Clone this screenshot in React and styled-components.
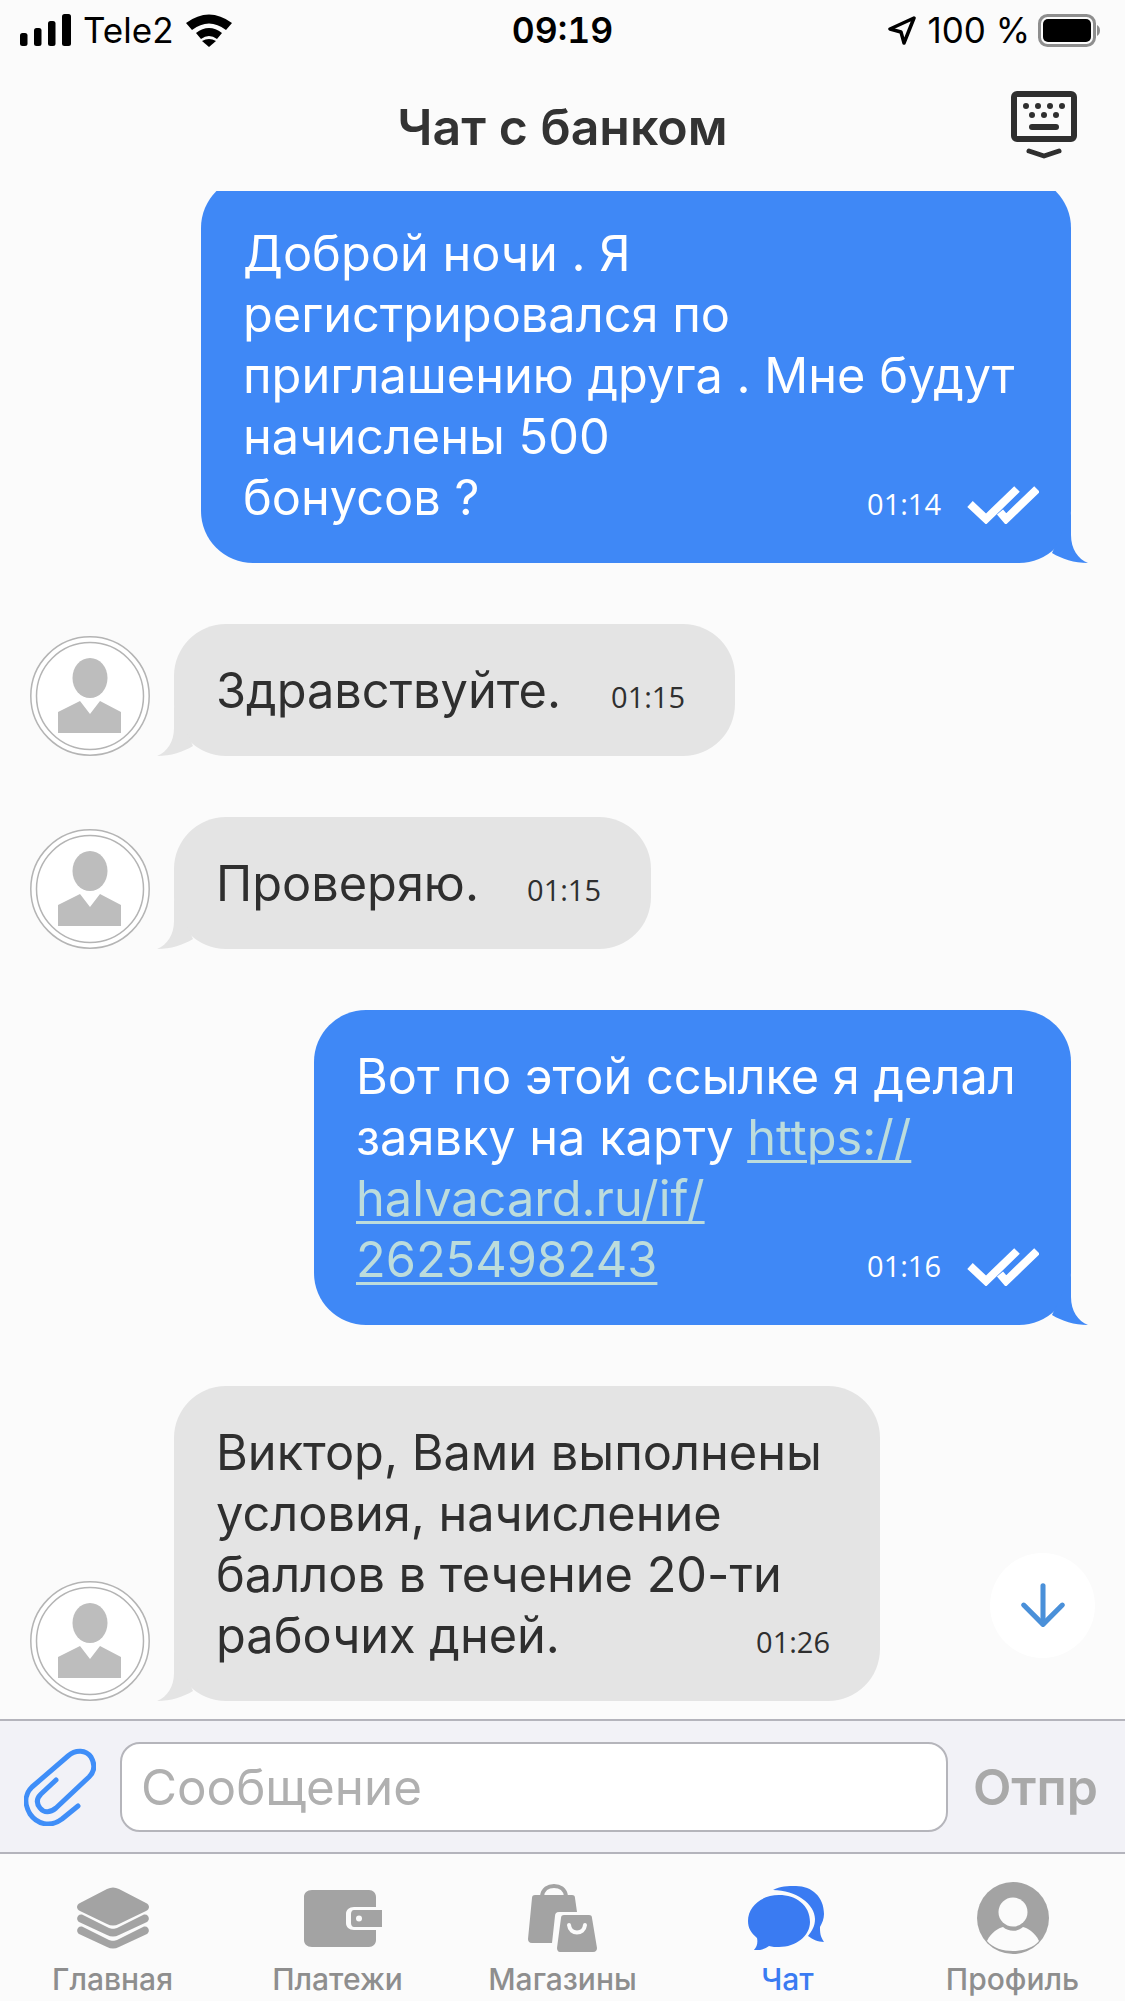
import React from 'react';
import styled, { createGlobalStyle } from 'styled-components';

const BLUE = '#3f88f6';
const GREY = '#e4e4e4';

const GlobalStyle = createGlobalStyle`
  html, body {
    margin: 0;
    padding: 0;
    background: #fbfbfb;
  }
  * {
    box-sizing: border-box;
  }
`;

const Page = styled.div`
  width: 1125px;
  height: 2001px;
  display: flex;
  flex-direction: column;
  overflow: hidden;
  position: relative;
  background: #fbfbfb;
  color: #2f2f2f;
  font-family: Inter, 'Noto Sans', sans-serif;
`;

const StatusBar = styled.div`
  height: 60px;
  flex: none;
  display: grid;
  grid-template-columns: 1fr auto 1fr;
  align-items: center;
  padding: 0 20px;
  color: #000;
  font-size: 35px;
`;

const StatusLeft = styled.div`
  display: flex;
  align-items: center;
  gap: 12px;
`;

const StatusRight = styled.div`
  display: flex;
  align-items: center;
  justify-content: flex-end;
  gap: 11px;
  padding-right: 5px;
`;

const BatteryLevel = styled.span`
  margin-right: -3px;
`;

const Clock = styled.div`
  font-size: 35.5px;
  font-weight: 600;
  font-variant-numeric: tabular-nums;
`;

const Header = styled.div`
  height: 131px;
  flex: none;
  display: grid;
  grid-template-columns: 1fr auto 1fr;
  align-items: center;
`;

const Title = styled.h1`
  grid-column: 2;
  margin: 3px 0 0;
  font-size: 50px;
  font-weight: 600;
  color: #333;
`;

const KeyboardButton = styled.div`
  justify-self: end;
  display: flex;
  margin: 0 48px 2px 0;
`;

const Messages = styled.div`
  flex: 1;
  min-height: 0;
  display: flex;
  flex-direction: column;
  gap: 61px;
  overflow: hidden;
  padding: 0 54px 0 30px;
`;

const Row = styled.div`
  display: flex;
  flex: none;
  align-items: flex-end;
  justify-content: ${p => (p.$own ? 'flex-end' : 'flex-start')};
  gap: 24px;
  margin-top: ${p => (p.$clip ? '-15px' : '0')};
`;

const Bubble = styled.div`
  position: relative;
  width: ${p => p.$width}px;
  padding: ${p => p.$top}px ${p => (p.$own ? 32 : 50)}px 35px 42px;
  border-radius: 52px;
  background: ${p => (p.$own ? BLUE : GREY)};
  color: ${p => (p.$own ? '#fff' : '#2f2f2f')};
  font-size: 48.7px;
  line-height: 61px;
`;

const LastLine = styled.div`
  display: flex;
  align-items: baseline;
  justify-content: space-between;
`;

const Meta = styled.span`
  display: inline-flex;
  align-items: center;
  gap: 26px;
  font-family: 'Open Sans', sans-serif;
  font-size: 29px;
  line-height: 30px;
  white-space: nowrap;
`;

const Link = styled.span`
  color: #bcdcdc;
  text-decoration: underline;
  text-decoration-thickness: 3px;
  text-underline-offset: 5px;
`;

const Tail = styled.svg`
  position: absolute;
  bottom: 0;
  ${p => (p.$own ? 'right: -17px;' : 'left: -17px;')}
`;

const Avatar = styled.svg`
  flex: none;
`;

const ScrollDown = styled.div`
  position: absolute;
  left: 990px;
  top: 1553px;
  width: 105px;
  height: 105px;
  border-radius: 50%;
  background: #fff;
  display: flex;
  align-items: center;
  justify-content: center;
`;

const Composer = styled.div`
  height: 135px;
  flex: none;
  display: flex;
  align-items: center;
  padding: 0 27px 0 24px;
  background: #f2f2f7;
  border-top: 2px solid #b4b4bc;
  border-bottom: 2px solid #b4b4bc;
`;

const ClipButton = styled.div`
  display: flex;
  margin-right: 24px;
`;

const MessageField = styled.div`
  width: 828px;
  height: 90px;
  flex: none;
  display: flex;
  align-items: center;
  padding: 0 19px;
  background: #fff;
  border: 2px solid #b5b5bb;
  border-radius: 20px;
  color: #b0b0b0;
  font-size: 49.3px;
`;

const SendLabel = styled.div`
  margin-left: auto;
  color: #a9a9a9;
  font-size: 50px;
  font-weight: 600;
`;

const TabBar = styled.div`
  height: 147px;
  flex: none;
  display: grid;
  grid-template-columns: repeat(5, 1fr);
  background: #fbfbfb;
`;

const Tab = styled.div`
  display: flex;
  flex-direction: column;
  align-items: center;
  color: ${p => (p.$active ? '#3a7bf2' : '#8e8e8e')};
  font-size: 30px;
  font-weight: 500;
`;

const TabIcon = styled.div`
  height: 72px;
  margin: 28px 0 0 ${p => p.$shift || 0}px;
  display: flex;
  align-items: center;
  justify-content: center;
`;

const TabLabel = styled.span`
  margin-top: 8px;
  line-height: 34px;
`;

const TailShape = ({ own, color }) => (
  <Tail $own={own} width="40" height="50" viewBox="0 0 40 50">
    {own ? (
      <path d="M23 0 L23 22 C23 36 30 46 40 50 C26 50 14 46 4 40Z" fill={color} />
    ) : (
      <path d="M17 0 L17 22 C17 36 10 46 0 50 C14 50 26 46 36 40Z" fill={color} />
    )}
  </Tail>
);

const DoubleCheck = () => (
  <svg width="72" height="40" viewBox="0 0 72 40" fill="none" stroke="#fff" strokeWidth="8">
    <path d="M3 20 L19 35 L50 5" />
    <path d="M33 28 L39 35 L70 5" />
  </svg>
);

const PersonAvatar = () => (
  <Avatar width="120" height="120" viewBox="0 0 120 120">
    <circle cx="60" cy="60" r="59.2" fill="#fff" stroke="#b4b4b4" strokeWidth="1.5" />
    <circle cx="60" cy="60" r="53.5" fill="#fff" stroke="#b4b4b4" strokeWidth="1.5" />
    <ellipse cx="60" cy="42" rx="17.5" ry="20" fill="#bdbdbd" />
    <path d="M28 97 L91 97 L91 76 L70 65 L60 78 L50 65 L28 76Z" fill="#bdbdbd" />
  </Avatar>
);

const SignalIcon = () => (
  <svg width="51" height="32" viewBox="0 0 51 32" fill="#000">
    <rect x="0" y="19" width="7.5" height="13" rx="2.5" />
    <rect x="14" y="14" width="7.5" height="18" rx="2.5" />
    <rect x="28" y="7" width="7.5" height="25" rx="2.5" />
    <rect x="42" y="0" width="9" height="32" rx="2.5" />
  </svg>
);

const WifiIcon = () => (
  <svg width="46" height="33" viewBox="0 0 46 33" fill="#000">
    <path d="M0 9 Q23 -8 46 9 L40 16 Q23 3 6 16Z" />
    <path d="M10 19 Q23 9 36 19 L31 25 Q23 19 15 25Z" />
    <path d="M23 33 L16 27 Q23 23 30 27Z" />
  </svg>
);

const LocationIcon = () => (
  <svg width="29" height="31" viewBox="0 0 29 31" fill="none" stroke="#000" strokeWidth="3.5" strokeLinejoin="round">
    <path d="M27 3 L3 14 L14 17 L17 28Z" />
  </svg>
);

const BatteryIcon = () => (
  <svg width="62" height="33" viewBox="0 0 62 33">
    <rect x="1.5" y="1.5" width="55" height="30" rx="8" fill="none" stroke="#8e8e8e" strokeWidth="3" />
    <rect x="5" y="5" width="48" height="23" rx="5" fill="#000" />
    <path d="M59 11 C61 12 62 14 62 16.5 C62 19 61 21 59 22Z" fill="#8e8e8e" />
  </svg>
);

const KeyboardIcon = () => (
  <svg width="66" height="68" viewBox="0 0 66 68" fill="#2f2f2f">
    <rect x="3" y="3" width="60" height="45" rx="3" fill="none" stroke="#2f2f2f" strokeWidth="6" />
    {[15, 27, 39, 51].map(x => <circle key={x} cx={x} cy="15" r="3" />)}
    {[21, 33, 45].map(x => <circle key={x} cx={x} cy="24" r="3" />)}
    <rect x="18" y="33" width="30" height="6" rx="3" />
    <path d="M18 60 L33 65 L48 60" fill="none" stroke="#2f2f2f" strokeWidth="5" strokeLinecap="round" strokeLinejoin="round" />
  </svg>
);

const ArrowDownIcon = () => (
  <svg width="46" height="46" viewBox="0 0 50 50" fill="none" stroke="#4a90d9" strokeWidth="5.5" strokeLinecap="round" strokeLinejoin="round">
    <path d="M25 3 V44" />
    <path d="M4 24 L25 45 L46 24" />
  </svg>
);

const PaperclipIcon = () => (
  <svg width="72" height="78" viewBox="0 0 72 78" fill="none" stroke="#3f8ef8" strokeWidth="5" strokeLinecap="round" strokeLinejoin="round">
    <path d="M54 58 L38 71 C26 80 13 76 6 66 C0 56 1 46 8 39 L44 8 C52 1 62 2 67 9 C71 16 71 23 65 29 L32 60 C26 65 20 65 16 60 C12 55 13 50 17 46 L32 32" />
  </svg>
);

const LayersIcon = () => (
  <svg width="74" height="62" viewBox="0 0 74 62" fill="#a3a3a3">
    <path d="M31 2 C35 0 39 0 43 2 L70 16 C74 18 74 22 70 24 L43 37 C39 39 35 39 31 37 L4 24 C0 22 0 18 4 16Z" />
    <path d="M7 28 L33 41 C35 42 39 42 41 41 L67 28 C72 26 75 32 71 35 L43 48 C39 50 35 50 31 48 L3 35 C-1 32 2 26 7 28Z" />
    <path d="M7 40 L33 53 C35 54 39 54 41 53 L67 40 C72 38 75 44 71 47 L43 60 C39 62 35 62 31 60 L3 47 C-1 44 2 38 7 40Z" />
  </svg>
);

const WalletIcon = () => (
  <svg width="78" height="57" viewBox="0 0 78 57" fill="#a3a3a3">
    <path d="M8 0 H65 C69 0 72 3 72 7 V17 H50 C45 17 42 20 42 24 V33 C42 37 45 40 50 40 H72 V50 C72 54 69 57 65 57 H8 C3 57 0 54 0 50 V7 C0 3 3 0 8 0Z" />
    <path d="M50 20 H78 V37 H50 C48 37 47 35 47 33 V24 C47 22 48 20 50 20Z" />
    <circle cx="55" cy="28.5" r="3" fill="#fbfbfb" />
  </svg>
);

const BagsIcon = () => (
  <svg width="69" height="68" viewBox="0 0 69 68" fill="#a3a3a3">
    <path d="M14 12 C15 5 20 2 26 2 C32 2 37 5 38 12" fill="none" stroke="#a3a3a3" strokeWidth="4" />
    <path d="M7 11 H44 C46 11 47 12 47 14 L49 28 H31 C28 28 27 30 27 32 L24 59 H4 C1 59 0 57 0 55 L4 14 C4 12 5 11 7 11Z" />
    <path d="M36 31 H61 C63 31 64 32 64 34 L69 64 C69 66 68 68 65 68 H32 C30 68 29 66 29 64 L33 34 C33 32 34 31 36 31Z" />
    <path d="M41 41 C42 51 56 51 57 41" fill="none" stroke="#fbfbfb" strokeWidth="4" strokeLinecap="round" />
  </svg>
);

const ChatIcon = () => (
  <svg width="76" height="64" viewBox="0 0 76 64" fill="#3a7bf2">
    <path d="M25 4 C32 0 40 0 48 0 C64 0 76 11 76 28 C76 33 74 37 72 41 C72 46 72 50 76 56 C70 56 64 53 60 50 C64 45 67 40 67 33 C67 18 48 4 25 4Z" />
    <path d="M31 9 C48 9 62 19 62 36 C62 50 48 61 31 61 C28 61 24 61 21 60 C17 63 10 65 5 65 C9 61 10 57 9 52 C3 47 0 42 0 35 C0 20 14 9 31 9Z" />
  </svg>
);

const ProfileIcon = () => (
  <svg width="72" height="72" viewBox="0 0 72 72">
    <circle cx="36" cy="36" r="36" fill="#a3a3a3" />
    <circle cx="36" cy="30" r="14.5" fill="#fbfbfb" />
    <path d="M10 59 C14 50 22 46 26 45 C32 50 40 50 46 45 C50 46 58 50 62 59 C56 66 46 69 36 69 C26 69 16 66 10 59Z" fill="#fbfbfb" />
  </svg>
);

const messages = [
  {
    own: true, clip: true, width: 870, top: 47, time: '01:14',
    lines: ['Доброй ночи . Я', 'регистрировался по', 'приглашению друга . Мне будут', 'начислены 500'],
    last: 'бонусов ?',
  },
  { width: 561, top: 36, time: '01:15', last: 'Здравствуйте.', avatar: true },
  { width: 477, top: 36, time: '01:15', last: 'Проверяю.', avatar: true },
  {
    own: true, width: 757, top: 36, time: '01:16',
    lines: ['Вот по этой ссылке я делал', <>заявку на карту <Link>https://</Link></>, <Link>halvacard.ru/if/</Link>],
    last: <Link>2625498243</Link>,
  },
  {
    width: 706, top: 36, time: '01:26', avatar: true,
    lines: ['Виктор, Вами выполнены', 'условия, начисление', 'баллов в течение 20-ти'],
    last: 'рабочих дней.',
  },
];

const tabs = [
  { label: 'Главная', icon: <LayersIcon /> },
  { label: 'Платежи', icon: <WalletIcon />, shift: 11 },
  { label: 'Магазины', icon: <BagsIcon /> },
  { label: 'Чат', icon: <ChatIcon />, shift: -3, active: true },
  { label: 'Профиль', icon: <ProfileIcon /> },
];

export default function App() {
  return (
    <Page>
      <GlobalStyle />
      <StatusBar>
        <StatusLeft>
          <SignalIcon />
          <span>Tele2</span>
          <WifiIcon />
        </StatusLeft>
        <Clock>09:19</Clock>
        <StatusRight>
          <LocationIcon />
          <BatteryLevel>100 %</BatteryLevel>
          <BatteryIcon />
        </StatusRight>
      </StatusBar>
      <Header>
        <Title>Чат с банком</Title>
        <KeyboardButton><KeyboardIcon /></KeyboardButton>
      </Header>
      <Messages>
        {messages.map((m, i) => (
          <Row key={i} $own={m.own} $clip={m.clip}>
            {m.avatar && <PersonAvatar />}
            <Bubble $own={m.own} $width={m.width} $top={m.top}>
              {m.lines && m.lines.map((line, j) => <div key={j}>{line}</div>)}
              <LastLine>
                <span>{m.last}</span>
                <Meta>
                  {m.time}
                  {m.own && <DoubleCheck />}
                </Meta>
              </LastLine>
              <TailShape own={m.own} color={m.own ? BLUE : GREY} />
            </Bubble>
          </Row>
        ))}
      </Messages>
      <ScrollDown><ArrowDownIcon /></ScrollDown>
      <Composer>
        <ClipButton><PaperclipIcon /></ClipButton>
        <MessageField>Сообщение</MessageField>
        <SendLabel>Отпр</SendLabel>
      </Composer>
      <TabBar>
        {tabs.map(t => (
          <Tab key={t.label} $active={t.active}>
            <TabIcon $shift={t.shift}>{t.icon}</TabIcon>
            <TabLabel>{t.label}</TabLabel>
          </Tab>
        ))}
      </TabBar>
    </Page>
  );
}
